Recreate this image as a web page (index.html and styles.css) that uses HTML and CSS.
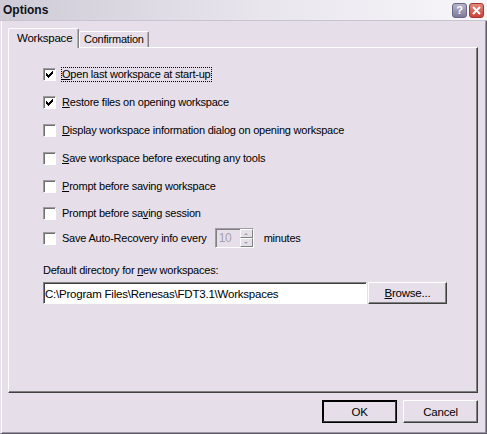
FILE: index.html
```html
<!DOCTYPE html>
<html>
<head>
<meta charset="utf-8">
<link rel="stylesheet" href="styles.css">
</head>
<body>
<div class="window">
  <div class="titlebar">
    <span class="title">Options</span>
    <div class="tbtns">
      <span class="tbtn help">?</span>
      <span class="tbtn close"><svg width="9" height="9" viewBox="0 0 9 9"><path d="M1 1 L8 8 M8 1 L1 8" stroke="#fff" stroke-width="2"/></svg></span>
    </div>
  </div>
  <div class="body">
    <div class="tabs">
      <div class="tab active">Workspace</div>
      <div class="tab">Confirmation</div>
    </div>
    <div class="panel">
      <div class="opts">
        <div class="row"><span class="cb checked"></span><span class="lbl focus"><u>O</u>pen last workspace at start-up</span></div>
        <div class="row"><span class="cb checked"></span><span class="lbl"><u>R</u>estore files on opening workspace</span></div>
        <div class="row"><span class="cb"></span><span class="lbl"><u>D</u>isplay workspace information dialog on opening workspace</span></div>
        <div class="row"><span class="cb"></span><span class="lbl"><u>S</u>ave workspace before executing any tools</span></div>
        <div class="row"><span class="cb"></span><span class="lbl"><u>P</u>rompt before saving workspace</span></div>
        <div class="row r6"><span class="cb"></span><span class="lbl">Prompt before sa<u>v</u>ing session</span></div>
        <div class="row spinrow"><span class="cb"></span><span class="lbl">Save Auto-Recovery info every</span>
          <span class="spin"><span class="spinval">10</span><span class="arrows"><span class="arr up"></span><span class="arr down"></span></span></span>
          <span class="lbl minutes">minutes</span></div>
      </div>
      <div class="dirlabel">Default directory for <u>n</u>ew workspaces:</div>
      <div class="dirrow">
        <div class="field">C:\Program Files\Renesas\FDT3.1\Workspaces</div>
        <div class="btn browse"><u>B</u>rowse...</div>
      </div>
    </div>
    <div class="buttons">
      <div class="btn default">OK</div>
      <div class="btn">Cancel</div>
    </div>
  </div>
</div>
</body>
</html>
```
FILE: styles.css
```css
html, body { margin: 0; padding: 0; }
body { width: 487px; height: 434px; overflow: hidden; background: #e6dfe9; font-family: "Liberation Sans", Arial, sans-serif; font-size: 11px; letter-spacing: -0.22px; color: #000; }
.window { width: 487px; height: 434px; box-sizing: border-box; display: flex; flex-direction: column; background: #e6dfe9; border-left: 1px solid #e6dfe9; border-right: 1px solid #5e5a68; border-bottom: 1px solid #5e5a68; box-shadow: inset 1px 0 #fff, inset -1px 0 #9b95a6, inset 0 -1px #9b95a6; }
.titlebar { height: 21px; flex: none; display: flex; align-items: center; justify-content: space-between; background: linear-gradient(to right, #cfcbd6, #e9e6ee 55%, #f7f6f9); border-bottom: 1px solid #c9c3cf; padding: 0 3px 0 3px; margin-left: -1px; margin-right: -1px; box-sizing: border-box; }
.title { font-weight: bold; font-size: 12px; color: #101018; letter-spacing: 0; }
.tbtns { display: flex; gap: 2px; }
.tbtn { width: 15px; height: 15px; box-sizing: border-box; border-radius: 3px; display: flex; align-items: center; justify-content: center; }
.help { background: linear-gradient(#b6b3cb, #7f7c9b); border: 1px solid #6a6784; color: #fff; font-weight: bold; font-size: 11px; }
.close { background: linear-gradient(#e3897d, #c9433a); border: 1px solid #a5352f; }
.body { flex: 1; display: flex; flex-direction: column; padding: 7px 8px 0 7px; }
.tabs { display: flex; align-items: flex-end; height: 19px; position: relative; z-index: 1; }
.tab { height: 16px; padding: 0 4px 0 4px; box-sizing: border-box; border-top: 1px solid #fff; border-left: 1px solid #fff; border-right: 1px solid #808080; box-shadow: inset -1px 0 #b6afba; border-radius: 2px 2px 0 0; line-height: 15px; font-size: 11px; }
.tab.active { height: 20px; margin-bottom: -1px; padding: 2px 6px 0 8px; background: #e6dfe9; width: 71px; font-size: 11.5px; }
.panel { height: 346px; box-sizing: border-box; border-top: 1px solid #fff; border-left: 1px solid #fff; border-right: 1px solid #404040; border-bottom: 1px solid #404040; box-shadow: inset -1px -1px #808080; padding: 12px 0 0 34px; }
.opts { display: flex; flex-direction: column; }
.row { height: 28px; display: flex; align-items: center; }
.row.r6 { height: 26px; }
.spinrow { height: 24px; }
.cb { width: 13px; height: 13px; box-sizing: border-box; background: #fff; border-top: 1px solid #a09aa4; border-left: 1px solid #a09aa4; border-right: 1px solid #fff; border-bottom: 1px solid #fff; box-shadow: inset 1px 1px #707070; margin-right: 6px; flex: none; position: relative; }
.cb.checked::after { content: ""; position: absolute; left: 2px; top: 2px; width: 7px; height: 7px; background: url("data:image/svg+xml;utf8,<svg xmlns='http://www.w3.org/2000/svg' width='7' height='7'><path d='M0 2h1v1h1v1h1v-1h1v-1h1v-1h1v-1h1v3h-1v1h-1v1h-1v1h-1v1h-1v-1h-1v-1h-1z' fill='black'/></svg>") no-repeat; }
.lbl { white-space: nowrap; line-height: 13px; }
.focus { outline: 1px dotted #000; outline-offset: 0px; padding: 0 1px 0 0; margin-left: 0; }
.spin { display: flex; height: 20px; width: 39px; margin-left: 8px; box-sizing: border-box; border-top: 1px solid #a09aa4; border-left: 1px solid #a09aa4; border-right: 1px solid #fff; border-bottom: 1px solid #fff; box-shadow: inset 1px 1px #808080; background: #e6dfe9; }
.spinval { flex: 1; color: #a6a0aa; padding: 2px 0 0 3px; font-size: 12px; }
.arrows { width: 13px; display: flex; flex-direction: column; }
.arr { flex: 1; box-sizing: border-box; border-top: 1px solid #fff; border-left: 1px solid #fff; border-right: 1px solid #808080; border-bottom: 1px solid #808080; display: flex; align-items: center; justify-content: center; }
.arr::after { content: ""; border-left: 2px solid transparent; border-right: 2px solid transparent; }
.up::after { border-bottom: 2px solid #a6a0aa; }
.down::after { border-top: 2px solid #a6a0aa; }
.minutes { margin-left: 10px; }
.dirlabel { margin-top: 14px; line-height: 13px; }
.dirrow { display: flex; margin-top: 5px; gap: 1px; }
.field { width: 324px; height: 22px; box-sizing: border-box; background: #fff; border-top: 1px solid #808080; border-left: 1px solid #808080; border-right: 1px solid #fff; border-bottom: 1px solid #fff; box-shadow: inset 1px 1px #404040; padding: 4px 3px 0 1px; font-size: 11.5px; line-height: 14px; white-space: nowrap; }
.btn { box-sizing: border-box; height: 23px; border-top: 1px solid #fff; border-left: 1px solid #fff; border-right: 1px solid #404040; border-bottom: 1px solid #404040; box-shadow: inset -1px -1px #808080; display: flex; align-items: center; justify-content: center; font-size: 11.5px; }
.browse { width: 79px; height: 22px; }
.buttons { display: flex; justify-content: flex-end; gap: 6px; margin-top: 7px; padding-right: 0; }
.buttons .btn { width: 75px; }
.btn.default { outline: 1px solid #000; outline-offset: -1px; border-right-color: #000; border-bottom-color: #000; box-shadow: inset -1px -1px #404040, inset 1px 1px #000; }
u { text-decoration: underline; text-underline-offset: 1px; }
```
